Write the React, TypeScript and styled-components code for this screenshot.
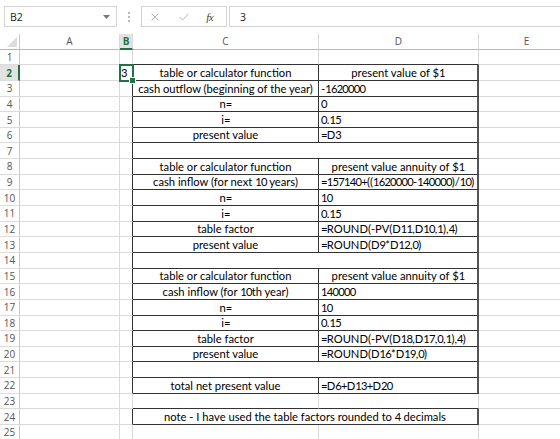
import React from 'react';
import styled, { createGlobalStyle, css } from 'styled-components';

const Global = createGlobalStyle`
  html, body { margin: 0; padding: 0; background: #fff; overflow: hidden; }
  #root { width: 560px; height: 439px; overflow: hidden; }
`;

const Window = styled.div`
  width: 560px;
  height: 439px;
  overflow: hidden;
  display: flex;
  flex-direction: column;
  background: #fff;
`;

const FormulaBar = styled.div`
  height: 34px;
  flex: none;
  box-sizing: border-box;
  display: flex;
  align-items: flex-start;
  padding: 6px 0 0 4px;
`;

const NameBox = styled.div`
  width: 113px;
  height: 21px;
  box-sizing: border-box;
  border: 1px solid #d4d4d4;
  display: flex;
  align-items: center;
  justify-content: space-between;
  padding: 0 6px 0 5px;
  font-family: "Open Sans", sans-serif;
  font-size: 10.5px;
  color: #222;
`;

const Dots = styled.div`
  width: 24px;
  height: 21px;
  display: flex;
  align-items: center;
  justify-content: center;
`;

const FxBox = styled.div`
  width: 86px;
  height: 21px;
  box-sizing: border-box;
  border: 1px solid #d4d4d4;
  display: flex;
  align-items: center;
  padding-left: 9px;
`;

const FxSlot = styled.div<{ $w: number }>`
  width: ${(p) => p.$w}px;
  height: 19px;
  display: flex;
  align-items: center;
`;

const FxText = styled.span`
  font-family: "Liberation Serif", serif;
  font-style: italic;
  font-size: 11px;
  color: #444;
  letter-spacing: -0.5px;
`;

const Input = styled.div`
  flex: 1;
  height: 21px;
  margin-left: 2px;
  box-sizing: border-box;
  border: 1px solid #d4d4d4;
  border-right: none;
  display: flex;
  align-items: center;
  padding-left: 10px;
  font-family: "Open Sans", sans-serif;
  font-size: 10.5px;
  color: #222;
`;

const Sheet = styled.div`
  display: grid;
  grid-template-columns: 20px 100px 13px 186px 160px 96px 200px;
  grid-template-rows: repeat(27, 15.65px);
  font-family: Lato, "Noto Sans", sans-serif;
  font-size: 11.2px;
  color: #000;
`;

const Corner = styled.div`
  box-sizing: border-box;
  border-right: 1px solid #c8c8c8;
  border-bottom: 1px solid #b8b8b8;
  display: flex;
  align-items: flex-end;
  justify-content: flex-end;
  padding: 0 2px 2px 0;
`;

const ColHead = styled.div<{ $sel?: boolean }>`
  box-sizing: border-box;
  border-right: 1px solid #d8d8d8;
  border-bottom: 1px solid #b8b8b8;
  display: flex;
  align-items: center;
  justify-content: center;
  font-family: "Open Sans", sans-serif;
  font-size: 10px;
  color: #555;
  ${(p) =>
    p.$sel &&
    css`
      background: #e2e2e2;
      color: #217346;
      font-weight: 700;
      border-bottom: 2px solid #217346;
    `}
`;

const RowHead = styled.div<{ $sel?: boolean }>`
  box-sizing: border-box;
  border-right: 1px solid #c8c8c8;
  border-bottom: 1px solid #dcdcdc;
  display: flex;
  align-items: center;
  justify-content: center;
  font-family: "Open Sans", sans-serif;
  font-size: 10px;
  color: #555;
  ${(p) =>
    p.$sel &&
    css`
      background: #e2e2e2;
      color: #217346;
      font-weight: 700;
      border-right: 2px solid #217346;
    `}
`;

type Edge = 'grid' | 'dark' | 'edge';
const edgeColor = (e: Edge) => (e === 'dark' ? '#333' : e === 'edge' ? '#555' : '#dadada');

const Cell = styled.div<{
  $right: Edge;
  $bottom: Edge;
  $align: 'left' | 'center';
  $span?: boolean;
  $sel?: boolean;
}>`
  position: relative;
  box-sizing: border-box;
  border-right: ${(p) => (p.$right === 'edge' ? 2 : 1)}px solid ${(p) => edgeColor(p.$right)};
  border-bottom: 1px solid ${(p) => edgeColor(p.$bottom)};
  display: flex;
  align-items: flex-end;
  justify-content: ${(p) => (p.$align === 'center' ? 'center' : 'flex-start')};
  padding: 0 2px 0 2px;
  line-height: 14px;
  white-space: nowrap;
  ${(p) => p.$span && css`grid-column: span 2;`}
  ${(p) =>
    p.$sel &&
    css`
      outline: 2px solid #217346;
      outline-offset: -1px;
      z-index: 2;
      padding-left: 1px;
      &::after {
        content: '';
        position: absolute;
        right: -4px;
        bottom: -4px;
        width: 5px;
        height: 5px;
        background: #217346;
        border: 1px solid #fff;
      }
    `}
`;

/* Lato figures are wider than the spreadsheet's font: tighten digit runs */
const Fig = styled.span`
  letter-spacing: -0.75px;
`;

const Txt = ({ s }: { s: string }) => {
  const parts = s.split(/([0-9=+]+)/);
  return (
    <span>
      {parts.map((p, i) => (/^[0-9=+]+$/.test(p) ? <Fig key={i}>{p}</Fig> : <React.Fragment key={i}>{p}</React.Fragment>))}
    </span>
  );
};

type RowData = { c?: string; d?: string; dAlign?: 'left' | 'center'; merged?: boolean; note?: string };

const data: Record<number, RowData> = {
  2: { c: 'table or calculator function', d: 'present value of $1', dAlign: 'center' },
  3: { c: 'cash outflow (beginning of the year)', d: '-1620000' },
  4: { c: 'n=', d: '0' },
  5: { c: 'i=', d: '0.15' },
  6: { c: 'present value', d: '=D3' },
  7: { merged: true },
  8: { c: 'table or calculator function', d: 'present value annuity of $1', dAlign: 'center' },
  9: { c: 'cash inflow (for next 10 years)', d: '=157140+((1620000-140000)/10)' },
  10: { c: 'n=', d: '10' },
  11: { c: 'i=', d: '0.15' },
  12: { c: 'table factor', d: '=ROUND(-PV(D11,D10,1),4)' },
  13: { c: 'present value', d: '=ROUND(D9*D12,0)' },
  14: { merged: true },
  15: { c: 'table or calculator function', d: 'present value annuity of $1', dAlign: 'center' },
  16: { c: 'cash inflow (for 10th year)', d: '140000' },
  17: { c: 'n=', d: '10' },
  18: { c: 'i=', d: '0.15' },
  19: { c: 'table factor', d: '=ROUND(-PV(D18,D17,0,1),4)' },
  20: { c: 'present value', d: '=ROUND(D16*D19,0)' },
  21: { merged: true },
  22: { c: 'total net present value', d: '=D6+D13+D20' },
  24: { merged: true, note: 'note - I have used the table factors rounded to 4 decimals' },
};

const bordered = (r: number) => (r >= 2 && r <= 22) || r === 24;

const CloseIcon = () => (
  <svg width="8" height="8" viewBox="0 0 8 8">
    <path d="M0.5 0.5 L7.5 7.5 M7.5 0.5 L0.5 7.5" stroke="#b4b4b4" strokeWidth="1" fill="none" />
  </svg>
);

const CheckIcon = () => (
  <svg width="10" height="8" viewBox="0 0 10 8">
    <path d="M0.5 4 L3.5 7 L9.5 0.8" stroke="#b4b4b4" strokeWidth="1" fill="none" />
  </svg>
);

const Caret = () => (
  <svg width="7" height="4" viewBox="0 0 7 4">
    <path d="M0 0 L7 0 L3.5 4 Z" fill="#777" />
  </svg>
);

const VDots = () => (
  <svg width="2" height="10" viewBox="0 0 2 10">
    <rect x="0" y="0" width="2" height="2" fill="#bbb" />
    <rect x="0" y="4" width="2" height="2" fill="#bbb" />
    <rect x="0" y="8" width="2" height="2" fill="#bbb" />
  </svg>
);

const SelectAll = () => (
  <svg width="10" height="10" viewBox="0 0 10 10">
    <path d="M10 0 L10 10 L0 10 Z" fill="#dcdcdc" />
  </svg>
);

const cols = ['A', 'B', 'C', 'D', 'E', 'F'];

export default function App() {
  const rows: React.ReactNode[] = [];
  for (let r = 1; r <= 26; r++) {
    const d = data[r] || {};
    rows.push(
      <RowHead key={`h${r}`} $sel={r === 2}>
        {r}
      </RowHead>
    );
    rows.push(<Cell key={`a${r}`} $right="grid" $bottom="grid" $align="left" />);
    rows.push(
      <Cell key={`b${r}`} $right={bordered(r) ? 'dark' : 'grid'} $bottom="grid" $align="left" $sel={r === 2}>
        {r === 2 ? '3' : ''}
      </Cell>
    );
    const bottom: Edge = bordered(r) || bordered(r + 1) ? 'dark' : 'grid';
    if (d.merged) {
      rows.push(
        <Cell key={`cd${r}`} $span $right="edge" $bottom={bottom} $align="center">
          {d.note ? <Txt s={d.note} /> : null}
        </Cell>
      );
    } else {
      rows.push(
        <Cell key={`c${r}`} $right={bordered(r) ? 'dark' : 'grid'} $bottom={bottom} $align="center">
          {d.c ? <Txt s={d.c} /> : null}
        </Cell>
      );
      rows.push(
        <Cell key={`d${r}`} $right={bordered(r) ? 'edge' : 'grid'} $bottom={bottom} $align={d.dAlign || 'left'}>
          {d.d ? <Txt s={d.d} /> : null}
        </Cell>
      );
    }
    rows.push(<Cell key={`e${r}`} $right="grid" $bottom="grid" $align="left" />);
    rows.push(<Cell key={`f${r}`} $right="grid" $bottom="grid" $align="left" />);
  }

  return (
    <Window>
      <Global />
      <FormulaBar>
        <NameBox>
          <span>B2</span>
          <Caret />
        </NameBox>
        <Dots>
          <VDots />
        </Dots>
        <FxBox>
          <FxSlot $w={28}>
            <CloseIcon />
          </FxSlot>
          <FxSlot $w={28}>
            <CheckIcon />
          </FxSlot>
          <FxSlot $w={20}>
            <FxText>fx</FxText>
          </FxSlot>
        </FxBox>
        <Input>3</Input>
      </FormulaBar>
      <Sheet>
        <Corner>
          <SelectAll />
        </Corner>
        {cols.map((c) => (
          <ColHead key={c} $sel={c === 'B'}>
            {c}
          </ColHead>
        ))}
        {rows}
      </Sheet>
    </Window>
  );
}
